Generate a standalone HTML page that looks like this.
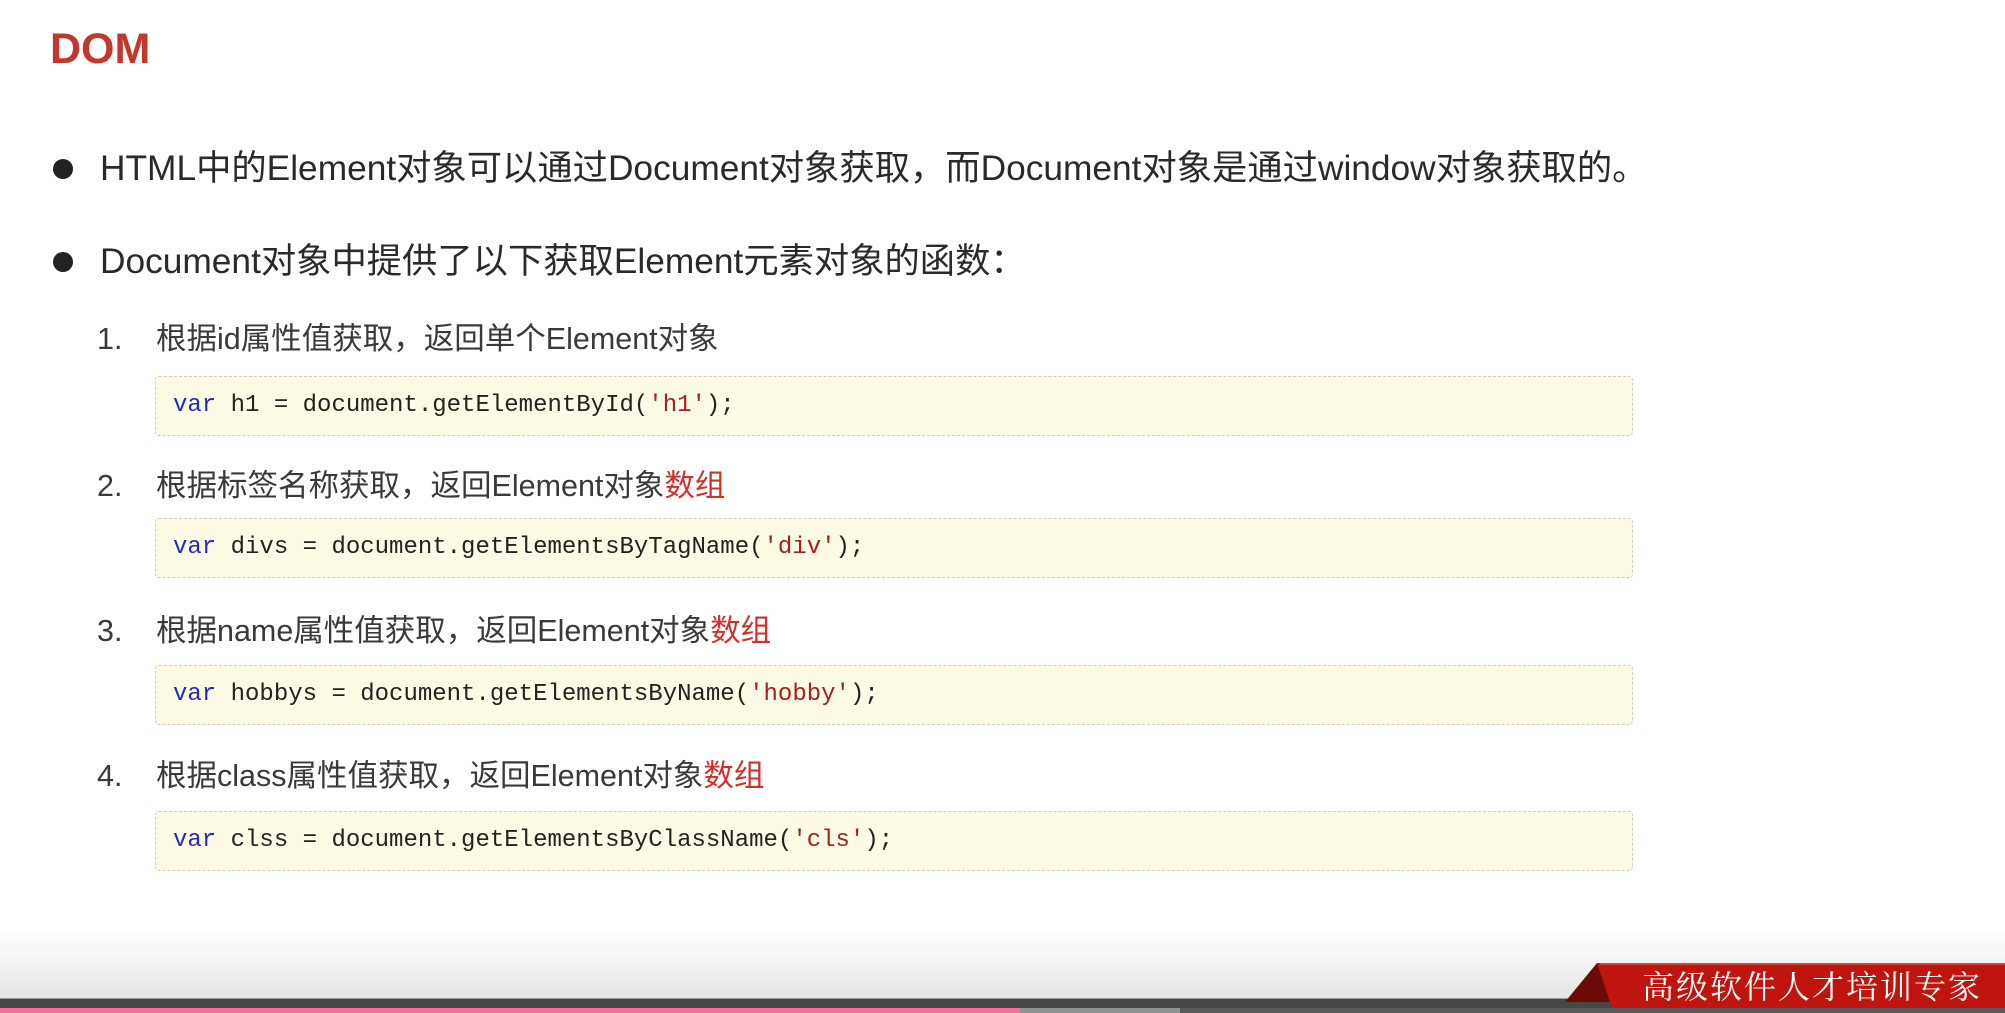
<!DOCTYPE html>
<html><head><meta charset="utf-8"><style>
*{margin:0;padding:0;box-sizing:border-box}
body{width:2005px;height:1013px;position:relative;overflow:hidden;background:#fff;font-family:"Liberation Sans","Noto Sans CJK SC",sans-serif;color:#2a2a2a}
.abs{position:absolute;white-space:nowrap}
h1{position:absolute;left:50px;top:22px;font-size:43px;font-weight:bold;color:#c4382b;line-height:54px}
.b{font-size:35.3px;line-height:44px;left:100px}
.dot{position:absolute;left:53px;width:20px;height:20px;border-radius:50%;background:#222}
.it{font-size:30.5px;line-height:36px;color:#3a3a3a}
.num{left:97px}.txt{left:156px}
.red{color:#d3302a}
.code{position:absolute;left:155px;width:1478px;height:60px;background:#fdfbe5;border:1.5px dashed #cfcfc4;border-radius:4px;font-family:"Liberation Mono",monospace;font-size:24px;line-height:57px;padding-left:17px;color:#222;white-space:nowrap}
.k{color:#1f2cc2}.s{color:#a8201a}
</style></head><body>
<h1>DOM</h1>
<div class="dot" style="top:159px"></div>
<div class="abs b" style="top:147px">HTML中的Element对象可以通过Document对象获取，而Document对象是通过window对象获取的。</div>
<div class="dot" style="top:252px"></div>
<div class="abs b" style="top:240px">Document对象中提供了以下获取Element元素对象的函数：</div>

<div class="abs it num" style="top:321px">1.</div>
<div class="abs it txt" style="top:321px">根据id属性值获取，返回单个Element对象</div>
<div class="code" style="top:376px"><span class="k">var</span> h1 = document.getElementById(<span class="s">'h1'</span>);</div>

<div class="abs it num" style="top:468px">2.</div>
<div class="abs it txt" style="top:468px">根据标签名称获取，返回Element对象<span class="red">数组</span></div>
<div class="code" style="top:518px"><span class="k">var</span> divs = document.getElementsByTagName(<span class="s">'div'</span>);</div>

<div class="abs it num" style="top:613px">3.</div>
<div class="abs it txt" style="top:613px">根据name属性值获取，返回Element对象<span class="red">数组</span></div>
<div class="code" style="top:665px"><span class="k">var</span> hobbys = document.getElementsByName(<span class="s">'hobby'</span>);</div>

<div class="abs it num" style="top:758px">4.</div>
<div class="abs it txt" style="top:758px">根据class属性值获取，返回Element对象<span class="red">数组</span></div>
<div class="code" style="top:811px"><span class="k">var</span> clss = document.getElementsByClassName(<span class="s">'cls'</span>);</div>

<div style="position:absolute;left:0;top:930px;width:2005px;height:70px;background:linear-gradient(#fff,#e4e4e4)"></div>
<div style="position:absolute;left:0;top:998px;width:2005px;height:10px;background:#474747;border-top:1px solid #999"></div>
<div style="position:absolute;left:0;top:1008px;width:1020px;height:5px;background:#ff6b9a"></div>
<div style="position:absolute;left:1020px;top:1008px;width:160px;height:5px;background:#8e9490"></div>
<div style="position:absolute;left:1180px;top:1008px;width:825px;height:5px;background:#5a5a5a"></div>
<svg style="position:absolute;left:1560px;top:960px" width="445" height="50">
<polygon points="5,42 37,3 55,3 55,42" fill="#6b0a06"/>
<polygon points="37,3 445,3 445,48 52,48" fill="#c0140e"/>
<rect x="40" y="3" width="405" height="2" fill="#d9413a"/>
</svg>
<div class="abs" style="left:1642px;top:963px;font-family:'Noto Serif CJK SC',serif;font-size:32px;line-height:44px;color:#fff;letter-spacing:2px">高级软件人才培训专家</div>
</body></html>
